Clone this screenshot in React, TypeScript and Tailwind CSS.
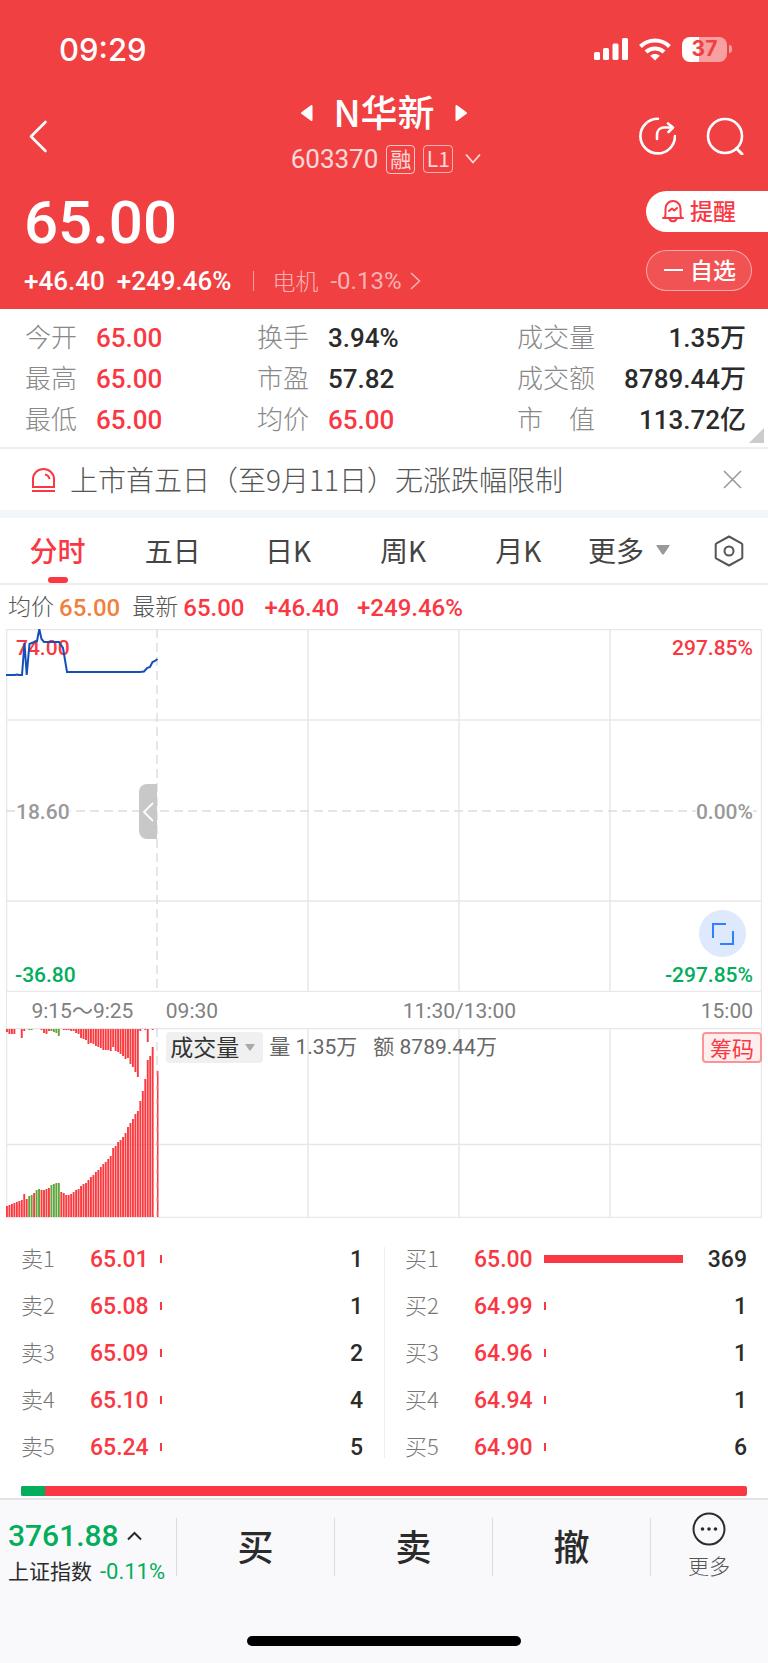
import type { ReactNode } from "react";

const NUM = "font-['Roboto','Noto_Sans_CJK_SC',sans-serif] font-medium";

const stats = [
    [
        { label: "今开", value: "65.00", red: true },
        { label: "最高", value: "65.00", red: true },
        { label: "最低", value: "65.00", red: true },
    ],
    [
        { label: "换手", value: "3.94%" },
        { label: "市盈", value: "57.82" },
        { label: "均价", value: "65.00", red: true },
    ],
    [
        { label: "成交量", value: "1.35万" },
        { label: "成交额", value: "8789.44万" },
        { label: "市　值", value: "113.72亿" },
    ],
];

const tabs = ["分时", "五日", "日K", "周K", "月K"];

const sells = [
    { name: "卖1", price: "65.01", count: 1 },
    { name: "卖2", price: "65.08", count: 1 },
    { name: "卖3", price: "65.09", count: 2 },
    { name: "卖4", price: "65.10", count: 4 },
    { name: "卖5", price: "65.24", count: 5 },
];

const buys = [
    { name: "买1", price: "65.00", count: 369 },
    { name: "买2", price: "64.99", count: 1 },
    { name: "买3", price: "64.96", count: 1 },
    { name: "买4", price: "64.94", count: 1 },
    { name: "买5", price: "64.90", count: 6 },
];

// call auction volumes, matched (from the bottom) and unmatched (from the top)
const matched = [
    11, 12, 13, 14, 15, 16, 17, 23, 18, 21, 22, 24, 27, 28, 27, 27, 28, 29, 32, 33,
    34, 34, 25, 24, 22, 22, 23, 25, 27, 28, 31, 33, 34, 37, 40, 42, 45, 47, 50, 53,
    55, 58, 61, 69, 71, 75, 77, 80, 84, 90, 94, 98, 103, 106, 116, 126, 138, 157, 161, 170,
];
const matchedGreen = [9, 10, 12, 13, 18, 19, 20, 21];
const unmatched = [
    3, 5, 5, 5, 0, 0, 9, 2, 0, 1, 1, 0, 0, 0, 1, 4, 5, 2, 2, 3,
    4, 7, 0, 1, 1, 1, 2, 2, 4, 5, 9, 10, 11, 15, 14, 15, 17, 18, 19, 21,
    21, 21, 22, 18, 22, 23, 25, 27, 30, 29, 35, 38, 43, 48, 2, 0, 1, 13, 0, 1,
];
const unmatchedGreen = [9, 10, 18, 19, 20, 21];

const StatusBar = () => (
    <div className="flex h-[88px] items-center justify-between pt-2.5 pr-9 pl-[59px]">
        <span className="font-['Inter',sans-serif] text-[31px] leading-none font-medium">09:29</span>
        <div className="flex items-center gap-[11px]">
            <svg width="34" height="22" viewBox="0 0 34 22" fill="currentColor">
                <rect x="0" y="14" width="6" height="8" rx="1.5" />
                <rect x="9" y="10" width="6" height="12" rx="1.5" />
                <rect x="18.5" y="5.500" width="6" height="16.500" rx="1.5" />
                <rect x="28" y="0" width="6" height="22" rx="1.5" />
            </svg>
            <svg width="32" height="23" viewBox="0 0 32 23" fill="none" stroke="currentColor" strokeWidth="4">
                <path d="M1.500 8.500C9.500 .6 22.500 .6 30.500 8.500" />
                <path d="M7 14C12 9.200 20 9.200 25 14" />
                <path d="M16 22.500l-4.800-4.700c2.700-2.400 6.900-2.400 9.600 0z" fill="currentColor" stroke="none" />
            </svg>
            <div className="flex items-center gap-0.5">
                <div className="flex h-[25px] w-[45px] items-center justify-center rounded-lg bg-linear-to-r from-white from-37% to-[#f8a0a0] to-37% font-['Inter',sans-serif] text-[21px] font-bold text-[#f04042]">
                    37
                </div>
                <div className="h-2 w-[3px] rounded-r-full bg-[#f8a0a0]" />
            </div>
        </div>
    </div>
);

const Header = () => (
    <header className="bg-[#f04042] text-white">
        <StatusBar />
        <div className="grid h-24 grid-cols-[1fr_auto_1fr] items-center">
            <button aria-label="返回" className="ml-7 justify-self-start">
                <svg width="20" height="34" viewBox="0 0 20 34" fill="none" stroke="currentColor" strokeWidth="2.600" strokeLinecap="round" strokeLinejoin="round">
                    <path d="M17.500 3L3 17.500L17.500 32" />
                </svg>
            </button>
            <div className="flex flex-col items-center">
                <div className="flex h-[46px] items-center gap-5">
                    <button aria-label="上一只">
                        <svg width="13" height="18" viewBox="0 0 13 18" fill="currentColor" stroke="currentColor" strokeWidth="2" strokeLinejoin="round">
                            <path d="M11.500 2v14L2 9z" />
                        </svg>
                    </button>
                    <h1 className="pb-1 text-[37px] leading-[42px] font-medium">N华新</h1>
                    <button aria-label="下一只">
                        <svg width="13" height="18" viewBox="0 0 13 18" fill="currentColor" stroke="currentColor" strokeWidth="2" strokeLinejoin="round">
                            <path d="M1.500 2v14L11 9z" />
                        </svg>
                    </button>
                </div>
                <div className="flex h-[46px] items-center gap-2 pl-1 text-white/80">
                    <span className="font-['Roboto',sans-serif] text-[26px] leading-none">603370</span>
                    <span className="flex h-[29px] w-[29px] items-center justify-center rounded border border-white/70 pb-0.5 text-[21px] leading-none">融</span>
                    <span className="flex h-7 w-[30px] items-center justify-center rounded border border-white/60 pb-0.5 text-[21px] leading-none">L1</span>
                    <svg className="ml-1" width="16" height="12" viewBox="0 0 16 12" fill="none" stroke="currentColor" strokeWidth="1.800">
                        <path d="M1 1.500L8 9.500L15 1.500" />
                    </svg>
                </div>
            </div>
            <div className="mr-6 flex gap-[30px] justify-self-end">
                <button aria-label="分享">
                    <svg width="38" height="38" viewBox="0 0 38 38" fill="none" stroke="currentColor" strokeWidth="2.600" strokeLinecap="round" strokeLinejoin="round">
                        <path d="M20 1.800A17.300 17.300 0 1 0 37 19" />
                        <path d="M19 22V18c0-4.500 3-7.500 7-7.500h8" />
                        <path d="M30 6.500l5 4L30.500 15" />
                    </svg>
                </button>
                <button aria-label="搜索">
                    <svg width="38" height="38" viewBox="0 0 38 38" fill="none" stroke="currentColor" strokeWidth="2.600" strokeLinecap="round">
                        <circle cx="19" cy="19" r="17" />
                        <path d="M30.500 31.500L36 37" strokeWidth="3" />
                    </svg>
                </button>
            </div>
        </div>
        <div className="flex h-[125px] justify-between">
            <div className="pt-2 pl-6">
                <div className={`${NUM} text-[60px] leading-[62px]`}>65.00</div>
                <div className={`${NUM} flex h-[54px] items-center text-[26px] leading-none`}>
                    <span>+46.40</span>
                    <span className="ml-3">+249.46%</span>
                    <span className="ml-[22px] h-5 w-px bg-white/50" />
                    <a href="#sector" className="ml-[18px] flex items-center font-normal text-white/60">
                        <span className="pb-0.5 font-['Noto_Sans_CJK_SC',sans-serif] text-[23px] font-light">电机</span>
                        <span className="ml-3 text-[24px]">-0.13%</span>
                        <svg className="ml-2" width="11" height="20" viewBox="0 0 11 20" fill="none" stroke="currentColor" strokeWidth="1.600">
                            <path d="M1 2l8.500 8L1 18" />
                        </svg>
                    </a>
                </div>
            </div>
            <div className="flex flex-col gap-[18px] pt-[7px]">
                <button className="flex h-[41px] w-[122px] items-center gap-1.5 rounded-l-full bg-white pb-0.5 pl-4 text-[23px] leading-none font-medium text-[#f93843]">
                    <svg width="22" height="24" viewBox="0 0 22 24" fill="none" stroke="currentColor" strokeWidth="2" strokeLinecap="round" strokeLinejoin="round">
                        <path d="M1 19h20M2.500 19c1-1.300 1-3 1-5V9.500a7.500 7.500 0 0 1 15 0V14c0 2 0 3.700 1 5" />
                        <path d="M7.500 20c1.300 3 5.700 3 7 0" />
                        <path d="M7 12l3-2.500 2.300 2L15 9" />
                    </svg>
                    提醒
                </button>
                <button className="flex h-[41px] w-[106px] items-center gap-[7px] rounded-full border border-white/50 bg-white/10 pb-0.5 pl-[17px] text-[23px] leading-none font-medium">
                    <span className="h-0.5 w-[19px] bg-white" />
                    自选
                </button>
            </div>
        </div>
    </header>
);

const Stats = () => (
    <section className="relative grid grid-cols-[232fr_260fr_229fr] border-b-2 border-[#efefef] pt-2 pr-[22px] pb-[7px] pl-[25px]">
        {stats.map((column, i) => (
            <dl key={i}>
                {column.map((item) => (
                    <div key={item.label} className={i === 2 ? "flex h-[41px] items-center justify-between" : "flex h-[41px] items-center gap-[19px]"}>
                        <dt className="shrink-0 pb-1 text-[26px] leading-none font-light text-[#888]">{item.label}</dt>
                        <dd className={`${NUM} text-[26px] leading-none ${item.red ? "text-[#f93843]" : "text-[#2b2b2b]"}`}>{item.value}</dd>
                    </div>
                ))}
            </dl>
        ))}
        <svg className="absolute right-1 bottom-1" width="15" height="15" viewBox="0 0 15 15" fill="#ccc">
            <path d="M15 0v15H0z" />
        </svg>
    </section>
);

const Notice = () => (
    <section className="flex h-[69px] items-center border-b-8 border-[#f2f5fa] pr-[26px] pl-8">
        <svg width="23" height="24" viewBox="0 0 23 24" fill="none" stroke="#f93843" strokeWidth="2">
            <path d="M1 19V11a10.500 10 0 0 1 21 0v8z" />
            <path d="M0 23h23" />
            <path d="M13 6.500c2.600.6 4.200 2.200 4.600 4.700" />
        </svg>
        <p className="ml-[15px] grow pb-0.5 text-[28px] leading-none font-light text-[#555]">上市首五日（至9月11日）无涨跌幅限制</p>
        <button aria-label="关闭">
            <svg width="19" height="19" viewBox="0 0 19 19" stroke="#999" strokeWidth="1.600">
                <path d="M1 1l17 17M18 1L1 18" />
            </svg>
        </button>
    </section>
);

const Tabs = () => (
    <nav className="flex h-[67px] items-stretch border-b-2 border-[#ececec] text-[28px] leading-none text-[#444]">
        {tabs.map((tab, i) => (
            <button key={tab} className={i === 0 ? "relative w-[15%] pb-0.5 font-medium text-[#f93843]" : "w-[15%] pb-0.5"}>
                {tab}
                {i === 0 && <span className="absolute bottom-0 left-1/2 h-1.5 w-5 -translate-x-1/2 rounded-full bg-[#f93843]" />}
            </button>
        ))}
        <button className="ml-3 flex items-center gap-3 pb-0.5">
            更多
            <svg width="14" height="10" viewBox="0 0 14 10" fill="#999">
                <path d="M1 0h12q1 0 .5 1L8 9q-1 1-2 0L.5 1Q0 0 1 0z" />
            </svg>
        </button>
        <button aria-label="设置" className="mr-6 ml-auto">
            <svg width="30" height="32" viewBox="0 0 30 32" fill="none" stroke="#555" strokeWidth="2">
                <path d="M15 1.500l12.500 6.800q.8.500.8 1.300v12.800q0 .8-.8 1.300L15 30.500 2.500 23.700q-.8-.5-.8-1.300V9.600q0-.8.8-1.300z" strokeLinejoin="round" />
                <circle cx="15" cy="16" r="4.500" />
            </svg>
        </button>
    </nav>
);

const Overlay = ({ className, children }: { className: string; children: ReactNode }) => (
    <span className={`absolute text-[21px] leading-none ${className}`}>{children}</span>
);

const PriceChart = () => (
    <div className={`${NUM} relative h-[363px]`}>
        <svg className="block h-full w-full" viewBox="0 0 756 363" preserveAspectRatio="none" fill="none" stroke="#e8e8ea" strokeWidth="1.500">
            <path d="M0 91H756M0 272H756M302 0V363M453 0V363M604 0V363" />
            <rect x="0.500" y="0.500" width="755" height="362" />
            <path d="M151 0V363" stroke="#d8dfe6" strokeDasharray="9 5" />
            <path d="M0 182H756" stroke="#d5dfe8" strokeDasharray="9 5" />
        </svg>
        <Overlay className="top-[9px] left-2.5 text-[#f93843]">74.00</Overlay>
        <svg className="absolute inset-0 h-full w-full" viewBox="0 0 756 363" preserveAspectRatio="none" fill="none" stroke="#1450b8" strokeWidth="2">
            <path d="M0 46H9L11 45.500L13 46H16L18.500 14L20.700 46L23.500 15L27 13.500L31 12L33.300 0L35.500 10L38 13H53L57 19L61 43H134L138 42.500L141 39L144 38L146.500 33L149 32L151.500 30" />
        </svg>
        <Overlay className="top-[9px] right-[9px] text-[#f93843]">297.85%</Overlay>
        <Overlay className="top-[173px] left-2.5 bg-white text-[#999]">18.60</Overlay>
        <Overlay className="top-[173px] right-[9px] bg-white text-[#999]">0.00%</Overlay>
        <Overlay className="bottom-1.5 left-[9px] text-[#02ad5b]">-36.80</Overlay>
        <Overlay className="right-[9px] bottom-1.5 text-[#02ad5b]">-297.85%</Overlay>
        <button aria-label="收起竞价" className="absolute top-[155px] right-4/5 flex h-[55px] w-[18px] items-center justify-center rounded-l-lg bg-[#c8c8c8]">
            <svg width="12" height="20" viewBox="0 0 12 20" fill="none" stroke="#fff" strokeWidth="1.800">
                <path d="M11 1L2 10l9 9" />
            </svg>
        </button>
        <button aria-label="全屏" className="absolute right-4 bottom-[35px] flex size-[47px] items-center justify-center rounded-full bg-[#dfe9fd]">
            <svg width="22" height="22" viewBox="0 0 22 22" fill="none" stroke="#2f80ff" strokeWidth="2">
                <path d="M1 15V1h13M21 8v13H8" />
            </svg>
        </button>
    </div>
);

const TimeAxis = () => (
    <div className="grid h-9 grid-cols-[1fr_2fr_2fr] items-center border-x border-[#e8e8ea] pt-0.5 font-['Roboto','Noto_Sans_CJK_SC',sans-serif] text-[21px] leading-none text-[#808080]">
        <span className="text-center">9:15～9:25</span>
        <span className="flex items-center pl-2">
            <span className="grow">09:30</span>
            <span className="translate-x-1/2">11:30/13:00</span>
        </span>
        <span className="pr-2 text-right">15:00</span>
    </div>
);

const VolumeChart = () => (
    <div className="relative h-[190px]">
        <svg className="block h-full w-full" viewBox="0 0 756 190" preserveAspectRatio="none">
            <g fill="none" stroke="#e8e8ea" strokeWidth="1.500">
                <path d="M0 116.500H756M302 0V190M453 0V190M604 0V190" />
                <rect x="0.500" y="0.500" width="755" height="189" />
            </g>
            {matched.map((h, i) => (
                <rect key={i} x={i * 2.47} y={189 - h} width="1.900" height={h} fill={matchedGreen.includes(i) ? "#5fa53c" : "#fb3a3f"} />
            ))}
            {unmatched.map((h, i) => (
                <rect key={i} x={i * 2.47} y="1" width="1.900" height={h} fill={unmatchedGreen.includes(i) ? "#5fa53c" : "#fb3a3f"} />
            ))}
            <path d="M151 0V43" stroke="#d8dfe6" strokeWidth="1.500" strokeDasharray="9 5" />
            <rect x="151" y="43" width="1.500" height="146" fill="#fb3a3f" />
            <path d="M151 43V189" stroke="#d9909a" strokeWidth="1" strokeDasharray="5 9" />
        </svg>
        <div className="absolute top-1 right-0 left-1/5 flex h-[31px] items-center pl-[9px] text-[21px] leading-none text-[#666]">
            <button className="flex h-full items-center gap-1.5 rounded bg-[#f0f0f0] pr-2 pb-0.5 pl-1 text-[23px] text-[#333]">
                成交量
                <svg className="mt-0.5" width="10" height="7" viewBox="0 0 10 7" fill="#aaa">
                    <path d="M0 0h10L5.500 6.500h-1z" />
                </svg>
            </button>
            <span className="ml-1.5 font-['Roboto','Noto_Sans_CJK_SC',sans-serif]">量 1.35万</span>
            <span className="ml-4 font-['Roboto','Noto_Sans_CJK_SC',sans-serif]">额 8789.44万</span>
            <button className="ml-auto h-full rounded border-2 border-[#fc9398] bg-[#ffeeee] px-1.5 pb-0.5 text-[22px] text-[#f93843]">筹码</button>
        </div>
    </div>
);

const Book = ({ rows, caption }: { rows: typeof sells; caption: string }) => (
    <table className="w-full table-fixed text-[23px] leading-none" aria-label={caption}>
        <tbody>
            {rows.map((row) => (
                <tr key={row.name} className="h-[47px]">
                    <th scope="row" className="w-[90px] pb-1 pl-[21px] text-left text-[22px] font-light text-[#777]">{row.name}</th>
                    <td className={`${NUM} w-[70px] pt-0.5 text-[#f93843]`}>{row.price}</td>
                    <td>
                        <div className="h-2 min-w-0.5 bg-[#f93843]" style={{ width: `${(row.count / 369) * 100}%` }} />
                    </td>
                    <td className={`${NUM} w-[85px] pt-0.5 pr-[21px] text-right text-[#2b2b2b]`}>{row.count}</td>
                </tr>
            ))}
        </tbody>
    </table>
);

const Footer = () => (
    <footer className="border-t-2 border-[#e3e3e6] bg-[#f9f9fc] pt-3 pb-[17px] text-[#2b2b2b]">
        <div className="flex items-start">
            <a href="#index" className="mt-1.5 w-[176px] pl-2">
                <span className={`${NUM} flex h-9 items-center gap-2 text-[30px] leading-none text-[#02ad5b]`}>
                    3761.88
                    <svg width="15" height="10" viewBox="0 0 15 10" fill="none" stroke="#2b2b2b" strokeWidth="2">
                        <path d="M1 8.500l6.500-6.500L14 8.500" />
                    </svg>
                </span>
                <span className="flex h-9 items-center gap-2 text-[21px] leading-none whitespace-nowrap">
                    <span className="pb-1">上证指数</span>
                    <span className="font-['Roboto',sans-serif] text-[22px] text-[#02ad5b]">-0.11%</span>
                </span>
            </a>
            {["买", "卖", "撤"].map((action) => (
                <button key={action} className="mt-1.5 h-[58px] grow border-l border-[#dcdce0] pb-1 text-[36px] leading-none font-medium">
                    {action}
                </button>
            ))}
            <div className="mt-1.5 h-[58px] w-px bg-[#dcdce0]" />
            <button className="-ml-px flex w-[118px] flex-col items-center text-[21px] font-light text-[#555]">
                <svg width="34" height="34" viewBox="0 0 34 34" fill="none" stroke="#2b2b2b" strokeWidth="2">
                    <circle cx="17" cy="17" r="15.500" />
                    <g fill="#2b2b2b" stroke="none">
                        <circle cx="10.500" cy="17" r="1.800" />
                        <circle cx="17" cy="17" r="1.800" />
                        <circle cx="23.500" cy="17" r="1.800" />
                    </g>
                </svg>
                <span className="pb-0.5 leading-[38px]">更多</span>
            </button>
        </div>
        <div className="mx-auto mt-[46px] h-2.5 w-[274px] rounded-full bg-black" />
    </footer>
);

const App = () => {
    return (
        <div className="bg-white font-['Noto_Sans_CJK_SC',sans-serif]">
            <Header />
            <Stats />
            <Notice />
            <Tabs />
            <main>
                <div className={`${NUM} flex h-11 items-center pt-0.5 pl-2 text-[24px] leading-none text-[#f93843]`}>
                    <span className="pb-0.5 text-[23px] font-light text-[#555]">均价</span>
                    <span className="ml-[5px] text-[#f08040]">65.00</span>
                    <span className="ml-3 pb-0.5 text-[23px] font-light text-[#555]">最新</span>
                    <span className="ml-[5px]">65.00</span>
                    <span className="ml-5">+46.40</span>
                    <span className="ml-[18px]">+249.46%</span>
                </div>
                <div className="mx-1.5">
                    <PriceChart />
                    <TimeAxis />
                    <VolumeChart />
                </div>
                <div className="relative mt-[17px] grid grid-cols-2">
                    <Book rows={sells} caption="卖盘" />
                    <Book rows={buys} caption="买盘" />
                    <div className="absolute inset-y-3 left-1/2 w-px bg-[#eee]" />
                </div>
                <div className="mt-4 mr-[21px] mb-0.5 ml-[21px] flex h-2.5 overflow-hidden rounded-xs bg-[#f93843]">
                    <div className="bg-[#02ad5b]" style={{ width: `${(13 / 391) * 100}%` }} />
                </div>
            </main>
            <Footer />
        </div>
    );
};

export default App;
